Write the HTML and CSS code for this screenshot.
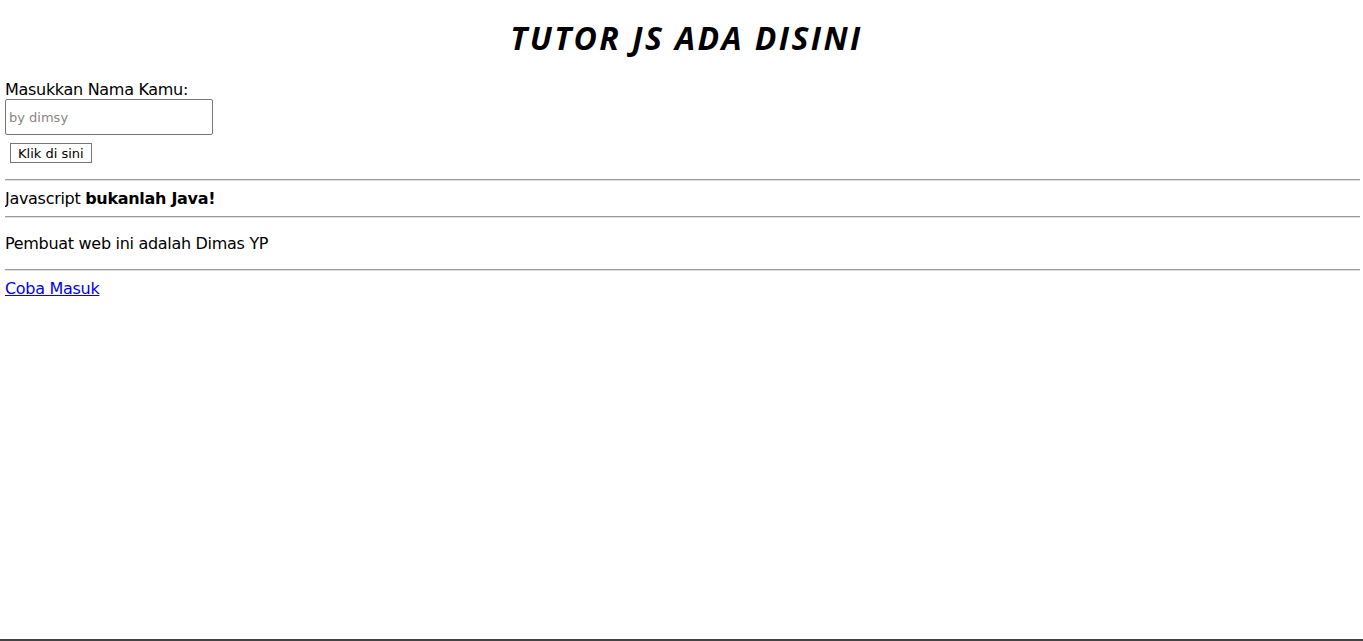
FILE: index.html
```html
<!DOCTYPE html>
<html lang="id">
<head>
<meta charset="utf-8">
<title>Tutor JS</title>
<link rel="stylesheet" href="styles.css">
</head>
<body>
<h1 class="title">TUTOR JS ADA DISINI</h1>
<form class="name-form">
  <label class="name-label" for="nama">Masukkan Nama Kamu:</label>
  <input class="name-input" id="nama" type="text" placeholder="by dimsy">
  <button class="btn" type="button">Klik di sini</button>
</form>
<hr class="rule">
<div class="line">Javascript <b>bukanlah Java!</b></div>
<hr class="rule">
<p class="para">Pembuat web ini adalah Dimas YP</p>
<hr class="rule">
<a class="link" href="#">Coba Masuk</a>
<div class="footer"></div>
</body>
</html>
```
FILE: styles.css
```css
html, body {
  background: #fff;
}
body {
  margin: 5px 3px 5px 5px;
  font-family: "DejaVu Sans", sans-serif;
  font-size: 16px;
  letter-spacing: -0.3px;
  color: #000;
}
.title {
  text-align: center;
  font-family: "Open Sans", sans-serif;
  font-style: italic;
  font-weight: 700;
  font-size: 32px;
  letter-spacing: 2.4px;
  margin: 11px 0 21px;
  padding-left: 8px;
}
.name-form {
  display: flex;
  flex-direction: column;
  align-items: flex-start;
}
.name-label {
  line-height: 19px;
}
.name-input {
  box-sizing: border-box;
  width: 208px;
  height: 36px;
  margin: 0;
  padding: 0 3px;
  border: 1px solid #767676;
  border-radius: 2px;
  font-family: "DejaVu Sans", sans-serif;
  font-size: 13px;
  letter-spacing: 0;
}
.name-input::placeholder {
  color: #8a8480;
}
.btn {
  margin: 8px 0 8px 5px;
  box-sizing: border-box;
  height: 20px;
  padding: 0 7px;
  background: #fff;
  border: 1px solid #767676;
  border-radius: 0;
  font-family: "DejaVu Sans", sans-serif;
  font-size: 13px;
  letter-spacing: 0;
  color: #000;
}
.rule {
  margin: 8px 0;
  border: 0;
  border-top: 1px solid #9a9a9a;
  border-bottom: 1px solid #e0e0e0;
  height: 0;
}
.line {
  line-height: 19px;
}
.para {
  margin: 16px 0;
}
.link {
  color: #0000ee;
}
.footer {
  position: fixed;
  left: 0;
  right: 0;
  bottom: 0;
  height: 2px;
  background: #444;
}
```
